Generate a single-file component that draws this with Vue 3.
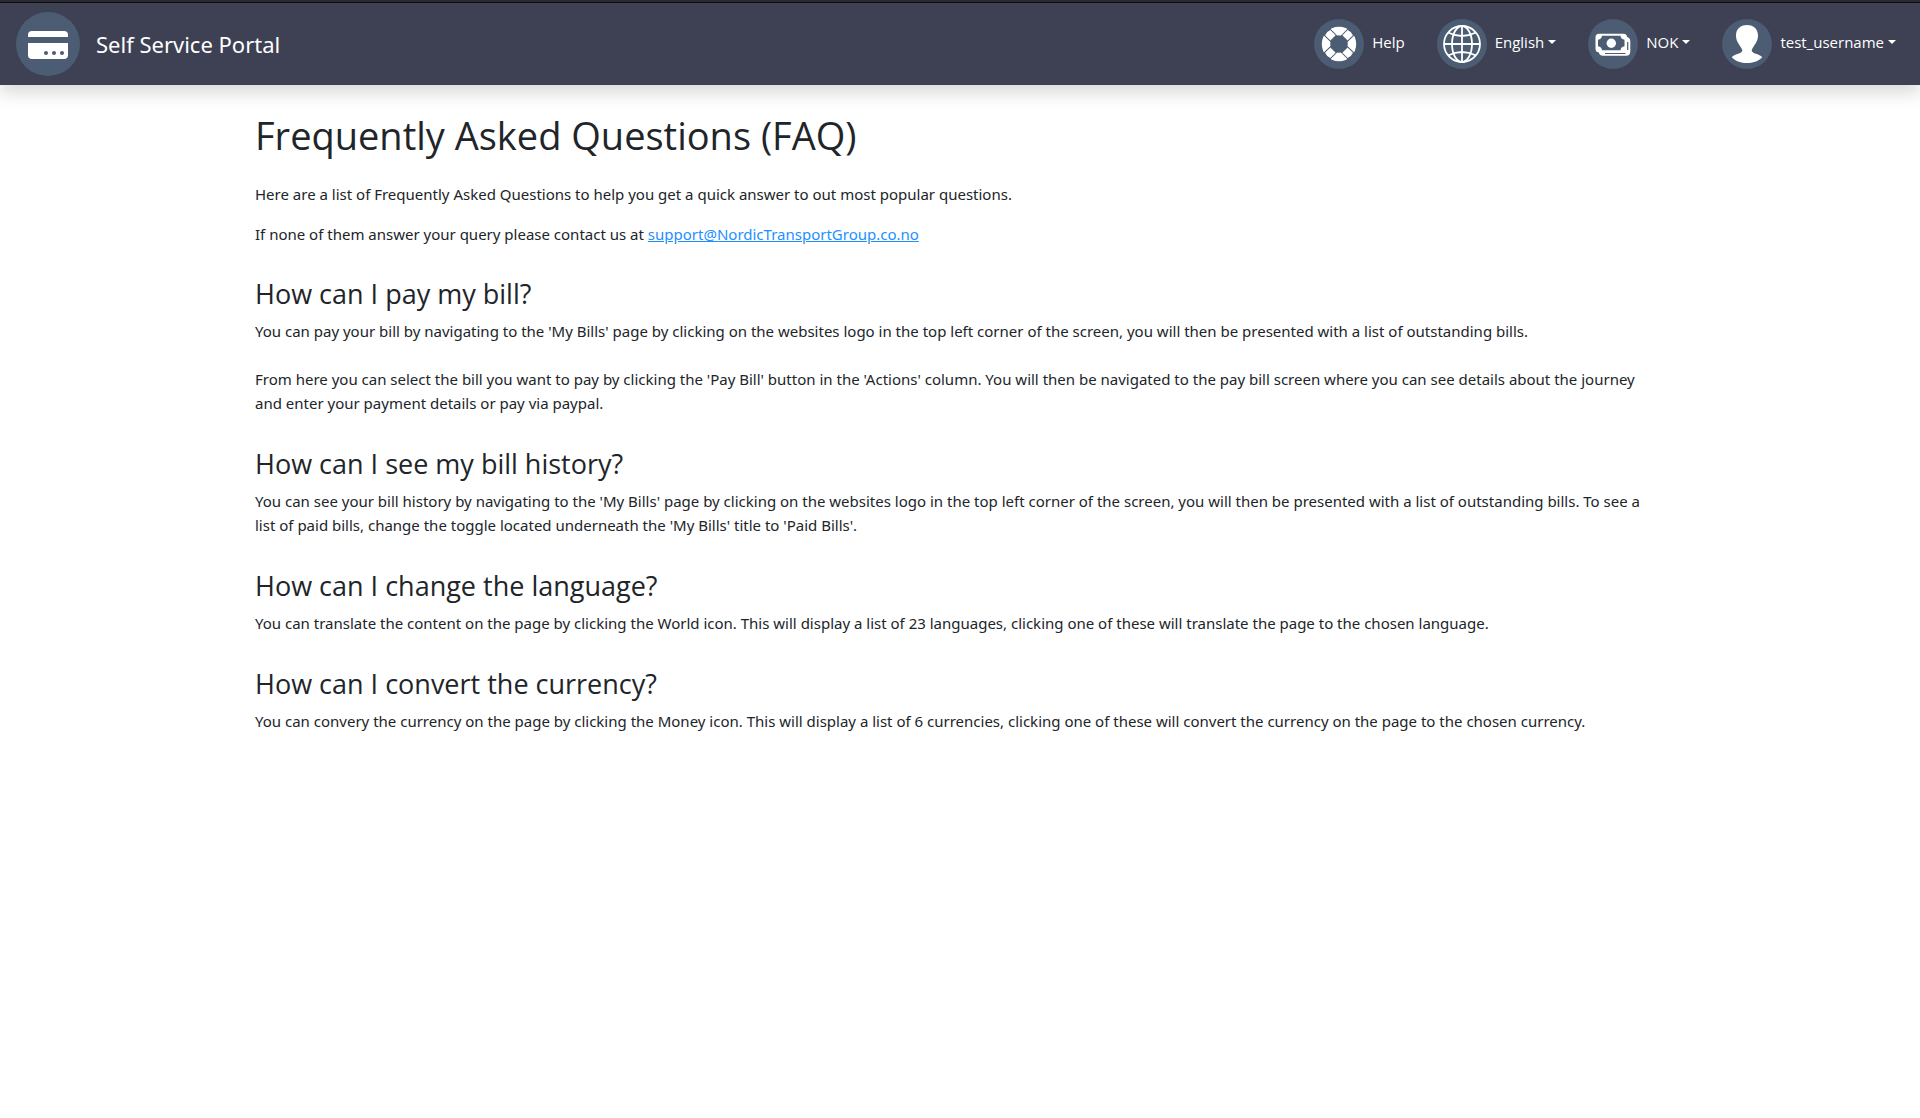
<script setup>
const sections = [
  {
    title: 'How can I pay my bill?',
    answers: [
      "You can pay your bill by navigating to the 'My Bills' page by clicking on the websites logo in the top left corner of the screen, you will then be presented with a list of outstanding bills.",
      "From here you can select the bill you want to pay by clicking the 'Pay Bill' button in the 'Actions' column. You will then be navigated to the pay bill screen where you can see details about the journey and enter your payment details or pay via paypal.",
    ],
  },
  {
    title: 'How can I see my bill history?',
    answers: [
      "You can see your bill history by navigating to the 'My Bills' page by clicking on the websites logo in the top left corner of the screen, you will then be presented with a list of outstanding bills. To see a list of paid bills, change the toggle located underneath the 'My Bills' title to 'Paid Bills'.",
    ],
  },
  {
    title: 'How can I change the language?',
    answers: [
      'You can translate the content on the page by clicking the World icon. This will display a list of 23 languages, clicking one of these will translate the page to the chosen language.',
    ],
  },
  {
    title: 'How can I convert the currency?',
    answers: [
      'You can convery the currency on the page by clicking the Money icon. This will display a list of 6 currencies, clicking one of these will convert the currency on the page to the chosen currency.',
    ],
  },
]
</script>

<template>
  <div class="page">
    <header class="navbar">
      <a class="brand" href="#">
        <svg class="brand-logo" viewBox="0 0 64 64" aria-hidden="true">
          <circle cx="32" cy="32" r="32" fill="#4c5c72" />
          <path d="M12 25v-2a4 4 0 0 1 4-4h32a4 4 0 0 1 4 4v2z" fill="#fff" />
          <path d="M12 31h40v12a4 4 0 0 1-4 4H16a4 4 0 0 1-4-4z" fill="#fff" />
          <g fill="#4c5c72">
            <circle cx="30" cy="41" r="2" />
            <circle cx="38" cy="41" r="2" />
            <circle cx="46" cy="41" r="2" />
          </g>
        </svg>
        <span>Self Service Portal</span>
      </a>

      <nav class="links">
        <a class="item" href="#help">
          <svg class="icon" viewBox="0 0 50 50" aria-hidden="true">
            <circle cx="25" cy="25" r="25" fill="#4c5c72" />
            <circle cx="25" cy="25" r="13" fill="none" stroke="#fff" stroke-width="8.400" />
            <g v-for="angle in [45, 135, 225, 315]" :key="angle" :transform="`rotate(${angle} 25 25)`">
              <path d="M20.300 6h9.400v12h-9.400z" fill="#4c5c72" />
              <path d="M21.300 9q3.700-1.500 7.400 0v7.500h-7.400z" fill="#fff" />
            </g>
          </svg>
          <span class="label">Help</span>
        </a>

        <button class="item" type="button" aria-haspopup="true">
          <svg class="icon" viewBox="0 0 50 50" aria-hidden="true">
            <circle cx="25" cy="25" r="25" fill="#4c5c72" />
            <g fill="none" stroke="#fff" stroke-width="1.8">
              <circle cx="25" cy="25" r="18" />
              <ellipse cx="25" cy="25" rx="10" ry="18" />
              <path d="M25 7v36M7 25h36M11 13.500q14 7 28 0M11 36.500q14-7 28 0" />
            </g>
          </svg>
          <span class="label">English<i class="caret"></i></span>
        </button>

        <button class="item" type="button" aria-haspopup="true">
          <svg class="icon" viewBox="0 0 50 50" aria-hidden="true">
            <circle cx="25" cy="25" r="25" fill="#4c5c72" />
            <path d="M10 30h28V17.500q4.300 1 4.300 4.500v10.500q0 4.200-4.200 4.200H14.500Q10.500 36.700 10 30z" fill="#fff" />
            <path d="M17 34.500h20.500M39.700 23v8" stroke="#4c5c72" stroke-width="1.200" />
            <rect x="7.500" y="14.700" width="31.500" height="18.600" rx="3.500" fill="#fff" />
            <path d="M14 16.800h18.500q.3 3.500 4 4v6.500q-3.700.5-4 4H14q-.3-3.500-4-4v-6.500q3.700-.5 4-4z" fill="#4c5c72" />
            <circle cx="23.300" cy="24.200" r="4.700" fill="#fff" />
          </svg>
          <span class="label">NOK<i class="caret"></i></span>
        </button>

        <button class="item" type="button" aria-haspopup="true">
          <svg class="icon" viewBox="0 0 50 50" aria-hidden="true">
            <circle cx="25" cy="25" r="25" fill="#4c5c72" />
            <path d="M25 6c7 0 11 4.500 11 10.500 0 5-2.500 8-4.300 11-1.400 2-2 3-2 4.500 2 3.500 7.500 2.500 10.500 6.200C36 42.500 31 44 25 44s-11-1.500-15.200-5.800c3-3.700 8.500-2.700 10.500-6.200 0-1.500-.6-2.500-2-4.500-1.800-3-4.300-6-4.300-11C14 10.500 18 6 25 6z" fill="#fff" />
          </svg>
          <span class="label">test_username<i class="caret"></i></span>
        </button>
      </nav>
    </header>

    <main class="content">
      <h1>Frequently Asked Questions (FAQ)</h1>
      <p class="intro">Here are a list of Frequently Asked Questions to help you get a quick answer to out most popular questions.</p>
      <p class="intro">
        If none of them answer your query please contact us at
        <a href="mailto:support@NordicTransportGroup.co.no">support@NordicTransportGroup.co.no</a>
      </p>

      <section v-for="section in sections" :key="section.title">
        <h2>{{ section.title }}</h2>
        <p v-for="answer in section.answers" :key="answer">{{ answer }}</p>
      </section>
    </main>
  </div>
</template>

<style>
body {
  margin: 0;
  background: #fff;
}
</style>

<style scoped>
.page {
  font-family: "Noto Sans", "Open Sans", sans-serif;
  font-size: 15px;
  line-height: 24px;
  color: #212529;
  border-top: 2px solid #2b2a33;
}

.navbar {
  display: flex;
  align-items: center;
  justify-content: space-between;
  padding: 9px 24px 9px 16px;
  border-top: 1px solid #0c0c0d;
  background: #3d4153;
  box-shadow: 0 8px 16px rgba(0, 0, 0, 0.15);
}

.brand {
  display: flex;
  align-items: center;
  gap: 16px;
  font-size: 22px;
  line-height: 26px;
  color: #fff;
  text-decoration: none;
}

.brand-logo {
  width: 64px;
  height: 64px;
}

.links {
  display: flex;
  gap: 32px;
  font-family: "Open Sans", "Noto Sans", sans-serif;
}

.item {
  display: flex;
  align-items: center;
  padding: 0;
  border: 0;
  background: none;
  font: inherit;
  color: #fff;
  text-decoration: none;
  cursor: pointer;
}

.icon {
  width: 50px;
  height: 50px;
  margin-right: 8px;
}

.label {
  display: flex;
  align-items: center;
  padding-bottom: 4px;
}

.caret {
  margin-left: 4px;
  border: 4px solid transparent;
  border-top-color: #fff;
  border-bottom: 0;
}

.content {
  box-sizing: border-box;
  width: 75%;
  margin: 0 auto;
  padding: 26px 24px 26px 15px;
}

h1,
h2,
p {
  margin: 0;
  font-weight: 400;
}

h1,
h2 {
  font-family: "Open Sans", "Noto Sans", sans-serif;
}

h1 {
  margin-bottom: 23px;
  font-size: 38px;
  line-height: 48px;
}

.intro {
  margin-bottom: 16px;
}

section {
  padding-top: 15px;
  padding-bottom: 17px;
}

h2 {
  margin-bottom: 8px;
  font-size: 27px;
  line-height: 34px;
}

section p + p {
  margin-top: 24px;
}

.content a {
  color: #1e90ff;
  text-decoration: underline;
}
</style>
